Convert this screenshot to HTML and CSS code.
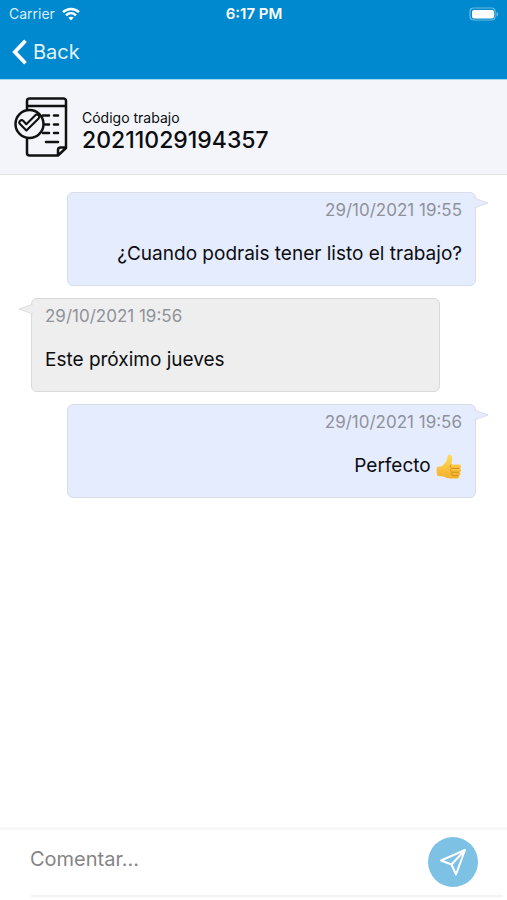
FILE: index.html
```html
<!DOCTYPE html>
<html lang="es">
<head>
<meta charset="utf-8">
<meta name="viewport" content="width=device-width, initial-scale=1">
<title>Trabajo 20211029194357</title>
<link rel="stylesheet" href="styles.css">
</head>
<body>
<header class="topbar">
  <div class="status">
    <div class="carrier">
      <span>Carrier</span>
      <svg class="wifi" viewBox="0 0 18 14" aria-hidden="true">
        <path d="M1 5.200C5.500.9 12.500.9 17 5.200M4 8.300c2.900-2.700 7.100-2.700 10 0" fill="none" stroke="#fff" stroke-width="2.500"/>
        <path d="M6.300 10.600c1.600-1.300 3.800-1.300 5.400 0L9 13.400z" fill="#fff"/>
      </svg>
    </div>
    <time class="clock">6:17 PM</time>
    <svg class="battery" viewBox="0 0 30 14" aria-hidden="true">
      <rect x="1" y="1" width="25" height="12" rx="3.500" fill="none" stroke="#6dbbe2" stroke-width="1.200"/>
      <rect x="3" y="3" width="22" height="8.500" rx="2" fill="#fff"/>
      <path d="M27.500 5v4.500c2.300-.8 2.300-3.700 0-4.500z" fill="#6dbbe2"/>
    </svg>
  </div>
  <a class="back" href="#">
    <svg class="chevron" viewBox="0 0 16 26" aria-hidden="true"><path d="M13.500 1.800 2.800 13l10.700 11.200" fill="none" stroke="#fff" stroke-width="3.800"/></svg>
    <span>Back</span>
  </a>
</header>
<section class="job">
  <svg class="job-icon" viewBox="0 0 54 60" fill="none" stroke="#111" stroke-width="2.500" stroke-linejoin="round" stroke-linecap="round" aria-hidden="true">
    <path d="M13 12V4a2.500 2.500 0 0 1 2.500-2.500H49.500A2.500 2.500 0 0 1 52 4v47L44 58.500H15.500A2.500 2.500 0 0 1 13 56V42M14 9h38M44 58.500V53a2.500 2.500 0 0 1 2.500-2.500H52"/>
    <path d="M29 18.500h6M40 18.500h4M31 27.500h4M40 27.500h4M29 36h6M40 36h4M32 45h12"/>
    <circle cx="15.500" cy="27" r="14"/>
    <path d="M9.200 23.800a2.300 2.300 0 0 0-3.200 3.300l6.400 6.500 12.200-12.200a2.300 2.300 0 0 0-3.300-3.200l-9 9z" stroke-width="2.100"/>
  </svg>
  <div>
    <div class="job-label">Código trabajo</div>
    <div class="job-code">20211029194357</div>
  </div>
</section>
<main class="chat">
  <article class="bubble sent">
    <svg class="tail" viewBox="0 0 14 14" aria-hidden="true"><path d="M0 2 14 7 0 12z" fill="#e5ecfe"/><path d="M0 2 14 7 0 12" fill="none" stroke="#d8dde9"/></svg>
    <time>29/10/2021 19:55</time>
    <p>¿Cuando podrais tener listo el trabajo?</p>
  </article>
  <article class="bubble received">
    <svg class="tail" viewBox="0 0 14 14" aria-hidden="true"><path d="M0 2 14 7 0 12z" fill="#eee"/><path d="M0 2 14 7 0 12" fill="none" stroke="#ddd"/></svg>
    <time>29/10/2021 19:56</time>
    <p>Este próximo jueves</p>
  </article>
  <article class="bubble sent">
    <svg class="tail" viewBox="0 0 14 14" aria-hidden="true"><path d="M0 2 14 7 0 12z" fill="#e5ecfe"/><path d="M0 2 14 7 0 12" fill="none" stroke="#d8dde9"/></svg>
    <time>29/10/2021 19:56</time>
    <p>Perfecto
      <svg class="thumb" viewBox="0 0 26 26" aria-hidden="true">
        <defs><linearGradient id="skin" x2="0" y2="1"><stop stop-color="#ffdc5c"/><stop offset="1" stop-color="#f5b02a"/></linearGradient></defs>
        <path d="M1 13c2-.7 4-.4 5.600-1.600 2.400-1.800 4.200-4.600 4.700-7.600.3-2 .7-3.300 2-3.300 2.500 0 3.300 2.900 2.800 5.500l-.8 4.500 7.500-.1c3 0 3 3.600.8 4 2.200.6 1.900 3.500-.2 3.800 1.700.7 1.300 3.200-.7 3.400 1.300.9.600 2.900-1.500 2.900h-7c-4 0-5.200-1.900-8-2.200L1.500 22C.4 19.200.3 15.500 1 13z" fill="url(#skin)"/>
        <path d="M15.300 10.500c-1.500 1-1.600 3.200.1 3.900h8M15.500 14.500c-1.500 1-1 3.300.5 3.700h7M16.300 18.300c-1.300 1-.8 2.900.5 3.300h5.500" fill="none" stroke="#cf8b16" stroke-width=".9"/>
      </svg>
    </p>
  </article>
</main>
<form class="composer">
  <input type="text" aria-label="Comentar" placeholder="Comentar...">
  <button type="button" aria-label="Enviar">
    <svg viewBox="0 0 28 28" fill="none" stroke="#fff" stroke-width="2" stroke-linejoin="round" aria-hidden="true"><path d="M26 2 2 12.500l10.500 4L17 26.500zM26 2 12.500 16.500"/></svg>
  </button>
</form>
</body>
</html>
```
FILE: styles.css
```css
* { box-sizing: border-box; }
body {
  margin: 0;
  min-height: 100vh;
  display: flex;
  flex-direction: column;
  background: #fff;
  color: #0c0d10;
  font-family: Inter, "Liberation Sans", sans-serif;
}
.topbar {
  height: 80px;
  background: #0089cf;
  border-bottom: 1px solid #a5dcf5;
  color: #fff;
}
.status {
  display: grid;
  grid-template-columns: 1fr auto 1fr;
  align-items: center;
  height: 27px;
  padding: 0 8px 0 9px;
  font-size: 14px;
}
.carrier { display: flex; align-items: center; gap: 7px; color: #d9effa; }
.wifi { width: 18px; height: 14px; }
.clock { font-size: 15px; font-weight: 600; }
.battery { width: 30px; height: 14px; justify-self: end; }
.back {
  display: inline-flex;
  align-items: center;
  gap: 5px;
  height: 50px;
  padding-left: 12px;
  color: #e3f4fc;
  font-size: 20px;
  text-decoration: none;
}
.chevron { width: 16px; height: 26px; }
.job {
  display: flex;
  align-items: center;
  gap: 14px;
  height: 95px;
  padding: 0 14px;
  background: #f3f5fa;
  border-bottom: 1px solid #dfe1e5;
}
.job-icon { width: 54px; height: 60px; }
.job-label { margin-top: 8px; font-size: 14px; line-height: 18px; }
.job-code { font-size: 23px; font-weight: 500; line-height: 26px; }
.chat {
  flex: 1;
  display: flex;
  flex-direction: column;
  gap: 12px;
  padding: 17px 31px;
}
.bubble {
  position: relative;
  width: 92%;
  height: 94px;
  padding: 6px 13px;
  border: 1px solid #d8dde9;
  border-radius: 6px;
}
.sent { align-self: flex-end; background: #e5ecfe; text-align: right; }
.received { align-self: flex-start; background: #eee; border-color: #d9d9d9; }
.bubble time { display: block; color: #8f9299; font-size: 17px; line-height: 22px; }
.bubble p { margin: 20px 0 0; font-size: 19px; line-height: 26px; }
.tail { position: absolute; top: 3px; width: 14px; height: 14px; }
.sent .tail { left: calc(100% - 1px); }
.received .tail { right: calc(100% - 1px); transform: scaleX(-1); }
.thumb { width: 26px; height: 26px; vertical-align: middle; }
.composer {
  display: flex;
  align-items: flex-start;
  height: 70px;
  margin-bottom: 3px;
  padding: 7px 29px 0 0;
  border-top: 3px solid #f7f7f7;
  background: linear-gradient(#f3f3f3, #f3f3f3) 31px 100% / calc(100% - 36px) 2px no-repeat;
}
.composer input {
  flex: 1;
  min-width: 0;
  height: 50px;
  padding: 0 0 6px 30px;
  border: 0;
  outline: 0;
  background: transparent;
  color: #222;
  font: 20px Inter, "Liberation Sans", sans-serif;
}
.composer input::placeholder { color: #858585; opacity: 1; }
.composer button {
  display: grid;
  place-items: center;
  width: 50px;
  height: 50px;
  padding: 0;
  border: 0;
  border-radius: 50%;
  background: #7dc1e5;
}
.composer button svg { width: 28px; height: 28px; }
```
